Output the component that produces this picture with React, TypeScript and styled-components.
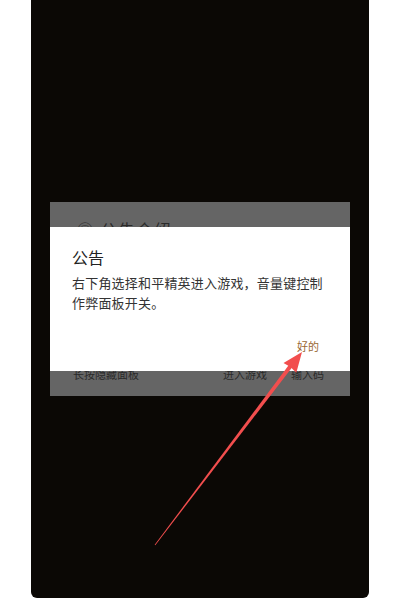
import React from "react";
import styled, { createGlobalStyle } from "styled-components";

const Global = createGlobalStyle`
  html, body { margin: 0; padding: 0; background: #ffffff; }
  body { width: 400px; height: 600px; overflow: hidden; font-family: "Noto Sans CJK SC", "Noto Sans", sans-serif; }
  #root { position: relative; width: 400px; height: 600px; }
`;

const Page = styled.div`
  position: relative;
  width: 400px;
  height: 600px;
  background: #ffffff;
`;

const Phone = styled.div`
  margin-left: 31px;
  width: 338px;
  height: 598px;
  background: #0b0805;
  border-radius: 0 0 6px 6px;
  display: grid;
  place-items: center;
`;

const Stack = styled.div`
  display: grid;
  align-items: center;
  justify-items: center;
  & > * { grid-area: 1 / 1; }
`;

const BackDialog = styled.div`
  width: 300px;
  height: 194px;
  box-sizing: border-box;
  background: #656565;
  padding: 19px 22px 14px 23px;
  display: flex;
  flex-direction: column;
  justify-content: space-between;
  color: #2a2a2a;
`;

const BackTitle = styled.div`
  font-size: 16px;
  line-height: 16px;
  padding-left: 4px;
  letter-spacing: 2px;
`;

const BackFooter = styled.div`
  display: flex;
  align-items: center;
  font-size: 11px;
  line-height: 16px;
`;

const BackAction = styled.span<{ $gap?: number }>`
  margin-left: ${(p) => p.$gap ?? 0}px;
`;

const Dialog = styled.div`
  width: 300px;
  height: 144px;
  box-sizing: border-box;
  background: #ffffff;
  padding: 19px 22px 18px 22px;
  display: flex;
  flex-direction: column;
`;

const Title = styled.div`
  font-size: 16px;
  line-height: 22px;
  color: #222222;
`;

const Body = styled.div`
  margin-top: 5px;
  font-size: 13px;
  line-height: 20px;
  letter-spacing: 0.2px;
  color: #333333;
`;

const Footer = styled.div`
  margin-top: auto;
  display: flex;
  justify-content: flex-end;
  padding-right: 9px;
`;

const OkButton = styled.span`
  font-size: 11px;
  line-height: 14px;
  color: #9a6834;
`;

const Arrow = styled.svg`
  position: absolute;
  left: 0;
  top: 0;
  pointer-events: none;
`;

export default function App() {
  return (
    <Page>
      <Global />
      <Phone>
        <Stack>
          <BackDialog>
            <BackTitle>◎ 公告介绍</BackTitle>
            <BackFooter>
              <span>长按隐藏面板</span>
              <BackAction $gap={84}>进入游戏</BackAction>
              <BackAction $gap={24}>输入码</BackAction>
            </BackFooter>
          </BackDialog>
          <Dialog>
            <Title>公告</Title>
            <Body>右下角选择和平精英进入游戏，音量键控制作弊面板开关。</Body>
            <Footer>
              <OkButton>好的</OkButton>
            </Footer>
          </Dialog>
        </Stack>
      </Phone>
      <Arrow width="400" height="600" viewBox="0 0 400 600">
        <polygon
          points="155.3,545.2 154.7,544.8 289.2,364.6 292.4,367.0"
          fill="#f24e4e"
        />
        <polygon
          points="302,352 296.3,372.7 290.5,367 283.5,363.1"
          fill="#f24e4e"
        />
      </Arrow>
    </Page>
  );
}
